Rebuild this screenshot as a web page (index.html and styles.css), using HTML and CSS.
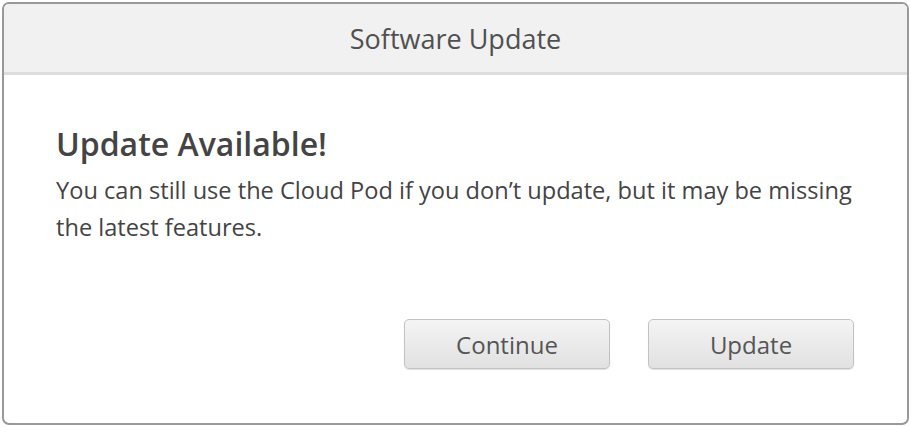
FILE: index.html
```html
<!DOCTYPE html>
<html>
<head>
<meta charset="utf-8">
<link rel="stylesheet" href="styles.css">
</head>
<body>
<div class="dialog">
  <div class="header">Software Update</div>
  <div class="content">
    <h1 class="title">Update Available!</h1>
    <p class="message">You can still use the Cloud Pod if you don’t update, but it may be missing the latest features.</p>
    <div class="actions">
      <button class="btn">Continue</button>
      <button class="btn">Update</button>
    </div>
  </div>
</div>
</body>
</html>
```

FILE: styles.css
```css
html, body {
  margin: 0;
  padding: 0;
  background: #ffffff;
}
body {
  padding: 2px;
  font-family: "Open Sans", "Noto Sans", sans-serif;
  color: #444444;
}
.dialog {
  box-sizing: border-box;
  width: 907px;
  height: 423px;
  border: 2px solid #999999;
  border-radius: 7px;
  overflow: hidden;
  display: flex;
  flex-direction: column;
}
.header {
  flex: none;
  height: 68px;
  background: #f1f1f1;
  border-bottom: 3px solid #dddddd;
  display: flex;
  align-items: center;
  justify-content: center;
  font-size: 27px;
  color: #505050;
}
.content {
  flex: 1;
  padding: 49px 53px 0 52px;
  display: flex;
  flex-direction: column;
}
.title {
  margin: 0;
  font-size: 32px;
  font-weight: 600;
  line-height: 40px;
  color: #444444;
}
.message {
  margin: 8px -13px 0 0;
  font-size: 23.6px;
  line-height: 37px;
  color: #444444;
}
.actions {
  display: flex;
  justify-content: flex-end;
  gap: 38px;
  margin-top: 73px;
}
.btn {
  box-sizing: border-box;
  width: 206px;
  height: 50px;
  border: 1px solid #c2c2c2;
  border-radius: 5px;
  background: linear-gradient(#f4f4f4, #e1e1e1);
  box-shadow: 0 1px 1px rgba(0,0,0,0.12);
  font-family: "Open Sans", "Noto Sans", sans-serif;
  font-size: 24px;
  color: #555555;
  padding: 0;
}
```
